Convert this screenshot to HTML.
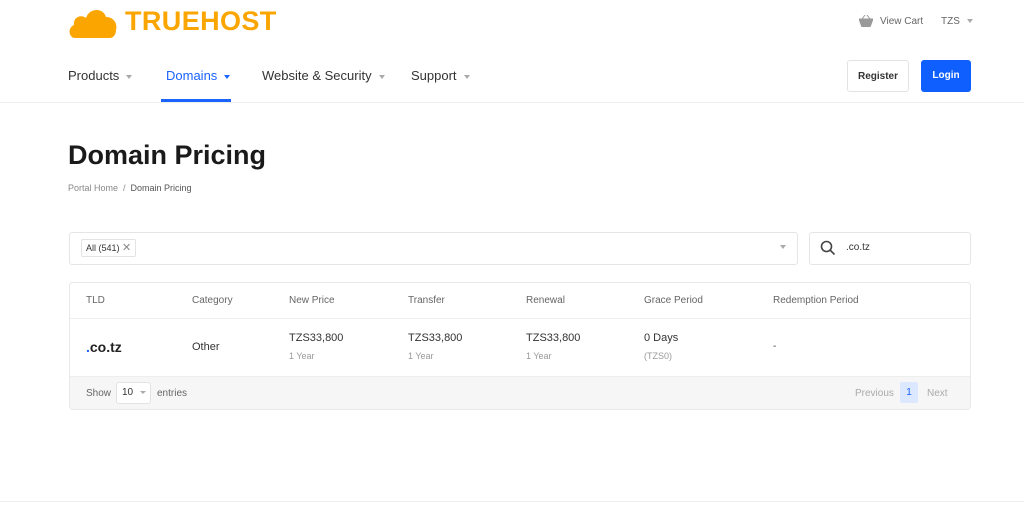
<!DOCTYPE html><html><head><style>
*{box-sizing:border-box;margin:0;padding:0}
body{width:1024px;height:506px;background:#fff;font-family:"Liberation Sans",sans-serif;position:relative;overflow:hidden;color:#222}
.a{position:absolute;white-space:nowrap}
.car{display:inline-block;width:0;height:0;border-left:3px solid transparent;border-right:3px solid transparent;border-top:4px solid #aaa;vertical-align:middle;margin-left:7px}
.nav{font-size:13px;color:#333;top:68px}
.th{font-size:10px;color:#666;top:295px}
.pr{font-size:11px;color:#333;top:332px}
.yr{font-size:9px;color:#999;top:351px}
</style></head><body>
<svg class="a" style="left:68px;top:7px" width="50" height="32" viewBox="0 0 50 32"><path d="M7 31 C1 31 -1 21 6 18 C5 10 13 7 18 11 C21 1 35 0 38 10 C45 10 50 16 48 23 C48 28 45 31 42 31 Z" fill="#fba500"/></svg>
<div class="a" style="left:125px;top:6px;font-size:27px;font-weight:bold;color:#fba500;letter-spacing:0.4px">TRUEHOST</div>
<svg class="a" style="left:859px;top:15px" width="14" height="12" viewBox="0 0 14 12"><path d="M0 4 H14 L11 12 H3 Z M3 4 L6 0 M11 4 L8 0" fill="#999" stroke="#999"/></svg>
<div class="a" style="left:880px;top:16px;font-size:10px;color:#666">View Cart</div>
<div class="a" style="left:941px;top:16px;font-size:10px;color:#666">TZS<span class="car"></span></div>
<div class="a nav" style="left:68px">Products<span class="car"></span></div>
<div class="a nav" style="left:166px;color:#1b63ff">Domains<span class="car" style="border-top-color:#1b63ff"></span></div>
<div class="a" style="left:161px;top:99px;width:70px;height:3px;background:#1b63ff"></div>
<div class="a nav" style="left:262px">Website &amp; Security<span class="car"></span></div>
<div class="a nav" style="left:411px">Support<span class="car"></span></div>
<div class="a" style="left:847px;top:60px;width:62px;height:32px;border:1px solid #e3e3e3;border-radius:3px;font-size:10px;font-weight:bold;color:#333;text-align:center;padding-top:10px">Register</div>
<div class="a" style="left:921px;top:60px;width:50px;height:32px;background:#0f5fff;border-radius:3px;font-size:10px;font-weight:bold;color:#fff;text-align:center;padding-top:10px">Login</div>
<div class="a" style="left:0;top:102px;width:1024px;height:1px;background:#eee"></div>
<div class="a" style="left:68px;top:140px;font-size:27px;font-weight:bold;color:#1a1a1a">Domain Pricing</div>
<div class="a" style="left:68px;top:183px;font-size:9px;color:#888">Portal Home &nbsp;/&nbsp; <span style="color:#555">Domain Pricing</span></div>
<div class="a" style="left:69px;top:232px;width:729px;height:33px;border:1px solid #e5e5e5;border-radius:3px"></div>
<div class="a" style="left:81px;top:239px;height:18px;padding:0 4px;border:1px solid #e3e3e3;border-radius:2px;font-size:9px;line-height:16px;color:#333">All (541) <span style="color:#888;font-size:11px">✕</span></div>
<div class="a" style="left:780px;top:245px;width:0;height:0;border-left:3px solid transparent;border-right:3px solid transparent;border-top:4px solid #aaa"></div>
<div class="a" style="left:809px;top:232px;width:162px;height:33px;border:1px solid #e5e5e5;border-radius:3px"></div>
<svg class="a" style="left:820px;top:240px" width="16" height="16" viewBox="0 0 16 16"><circle cx="6.5" cy="6.5" r="5" fill="none" stroke="#444" stroke-width="1.6"/><path d="M10 10 L14.5 14.5" stroke="#444" stroke-width="1.6"/></svg>
<div class="a" style="left:846px;top:242px;font-size:10px;color:#333">.co.tz</div>
<div class="a" style="left:69px;top:282px;width:902px;height:128px;border:1px solid #e8e8e8;border-radius:4px;overflow:hidden">
<div style="position:absolute;left:0;top:35px;width:100%;height:1px;background:#eee"></div>
<div style="position:absolute;left:0;top:93px;width:100%;height:35px;background:#f6f6f6;border-top:1px solid #eee"></div>
</div>
<div class="a th" style="left:86px">TLD</div><div class="a th" style="left:192px">Category</div><div class="a th" style="left:289px">New Price</div><div class="a th" style="left:408px">Transfer</div><div class="a th" style="left:526px">Renewal</div><div class="a th" style="left:644px">Grace Period</div><div class="a th" style="left:773px">Redemption Period</div>
<div class="a" style="left:86px;top:339px;font-size:14px;font-weight:bold;color:#222"><span style="color:#1b63ff">.</span>co.tz</div>
<div class="a" style="left:192px;top:341px;font-size:11px;color:#333">Other</div>
<div class="a pr" style="left:289px">TZS33,800</div><div class="a yr" style="left:289px">1 Year</div>
<div class="a pr" style="left:408px">TZS33,800</div><div class="a yr" style="left:408px">1 Year</div>
<div class="a pr" style="left:526px">TZS33,800</div><div class="a yr" style="left:526px">1 Year</div>
<div class="a pr" style="left:644px">0 Days</div><div class="a yr" style="left:644px">(TZS0)</div>
<div class="a" style="left:773px;top:341px;font-size:10px;color:#444">-</div>
<div class="a" style="left:86px;top:388px;font-size:10px;color:#666">Show</div>
<div class="a" style="left:116px;top:382px;width:35px;height:22px;background:#fff;border:1px solid #e3e3e3;border-radius:3px;font-size:10px;line-height:20px;padding-left:5px;color:#333">10<span class="car" style="border-top-width:3px"></span></div>
<div class="a" style="left:157px;top:388px;font-size:10px;color:#666">entries</div>
<div class="a" style="left:855px;top:388px;font-size:10px;color:#aaa">Previous</div>
<div class="a" style="left:900px;top:382px;width:18px;height:21px;background:#dce8ff;border-radius:2px;font-size:10px;color:#1b63ff;text-align:center;line-height:21px">1</div>
<div class="a" style="left:927px;top:388px;font-size:10px;color:#aaa">Next</div>
<div class="a" style="left:0;top:501px;width:1024px;height:1px;background:#eee"></div>
</body></html>
